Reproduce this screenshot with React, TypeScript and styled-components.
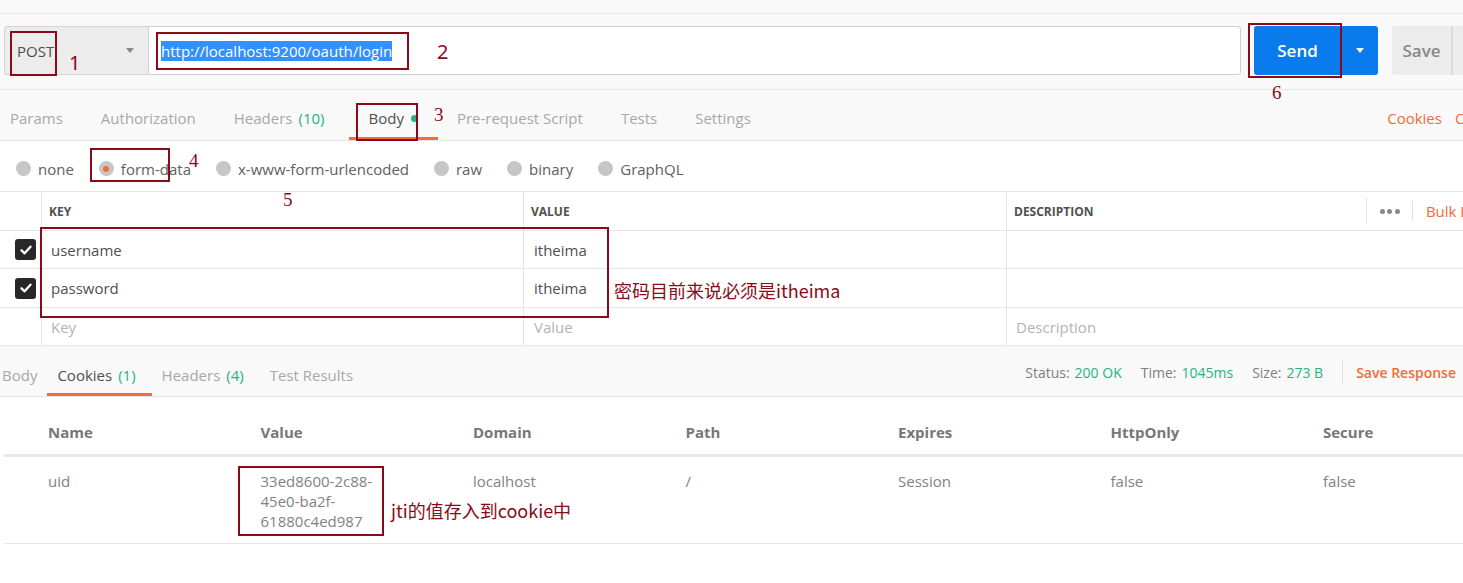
import React from "react";
import styled, { createGlobalStyle, css } from "styled-components";

const Global = createGlobalStyle`
  html, body { margin: 0; padding: 0; background: #ffffff; }
  body {
    font-family: "Open Sans", "Noto Sans", sans-serif;
    color: #505050;
    width: 1463px;
    height: 583px;
    overflow: hidden;
  }
  * { box-sizing: border-box; }
`;

const ORANGE = "#f26b3a";
const GREEN = "#26b47f";
const MARK = "#8b0a1a";

const Page = styled.div`
  position: relative;
  width: 1463px;
  height: 583px;
  overflow: hidden;
  background: #ffffff;
`;

const TopStrip = styled.div`
  height: 14px;
  background: #f9f9f9;
  border-bottom: 1px solid #e6e6e6;
`;

const RequestBar = styled.div`
  display: flex;
  align-items: flex-start;
  height: 76px;
  padding: 12px 0 0 4px;
  background: #f9f9f9;
  border-bottom: 1px solid #e6e6e6;
  & > * { flex-shrink: 0; }
`;

const MethodSelect = styled.div`
  width: 144px;
  height: 49px;
  display: flex;
  align-items: center;
  justify-content: space-between;
  padding: 0 14px 0 12px;
  background: #ececec;
  border: 1px solid #d4d4d4;
  border-right: none;
  border-radius: 3px 0 0 3px;
  font-size: 15px;
  color: #505050;
`;

const Caret = styled.span<{ $color: string }>`
  width: 0;
  height: 0;
  border-left: 4.5px solid transparent;
  border-right: 4.5px solid transparent;
  border-top: 5px solid ${(p) => p.$color};
`;

const UrlInput = styled.div`
  width: 1093px;
  height: 49px;
  display: flex;
  align-items: center;
  padding-left: 12px;
  background: #ffffff;
  border: 1px solid #d0d0d0;
  border-radius: 0 3px 3px 0;
  font-size: 15px;
`;

const Selected = styled.span`
  background: #3390ff;
  color: #ffffff;
  line-height: 20px;
`;

const SendGroup = styled.div`
  display: flex;
  margin-left: 13px;
  height: 49px;
`;

const SendButton = styled.div`
  width: 87px;
  display: flex;
  align-items: center;
  justify-content: center;
  background: #097bed;
  color: #ffffff;
  font-size: 17px;
  font-weight: 600;
  border-radius: 3px 0 0 3px;
`;

const SendMore = styled.div`
  width: 37px;
  display: flex;
  align-items: center;
  justify-content: center;
  background: #097bed;
  border-left: 1px solid #0a6fd8;
  border-radius: 0 3px 3px 0;
`;

const SaveButton = styled.div`
  width: 61px;
  height: 49px;
  margin-left: 14px;
  display: flex;
  align-items: center;
  justify-content: center;
  background: #ececec;
  color: #888888;
  font-size: 17px;
  font-weight: 600;
  border-radius: 3px 0 0 3px;
  border-right: 2px solid #dcdcdc;
`;

const SaveMore = styled.div`
  width: 20px;
  height: 49px;
  background: #ececec;
`;

const TabsRow = styled.div`
  display: flex;
  align-items: stretch;
  height: 51px;
  background: #f9f9f9;
  border-bottom: 1px solid #e6e6e6;
`;

const TabList = styled.div<{ $offset: number }>`
  display: flex;
  flex-shrink: 0;
  margin-left: ${(p) => p.$offset}px;
`;

const Tab = styled.div<{ $active?: boolean; $padX: number; $padTop: number }>`
  position: relative;
  display: flex;
  align-items: center;
  padding: ${(p) => p.$padTop}px ${(p) => p.$padX}px 0;
  font-size: 15px;
  white-space: nowrap;
  color: ${(p) => (p.$active ? "#505050" : "#a8a8a8")};
  ${(p) =>
    p.$active &&
    css`
      &::after {
        content: "";
        position: absolute;
        left: 0;
        right: 0;
        bottom: 0;
        height: 3px;
        background: ${ORANGE};
      }
    `}
`;

const Count = styled.span`
  color: ${GREEN};
  margin-left: 6px;
  padding-right: 6px;
`;

const Dot = styled.span`
  width: 7px;
  height: 7px;
  border-radius: 50%;
  background: ${GREEN};
  margin-left: 7px;
  margin-right: 1px;
`;

const RightLinks = styled.div`
  margin-left: auto;
  margin-right: -28px;
  display: flex;
  align-items: center;
  gap: 13px;
  padding-top: 6px;
  font-size: 15px;
  color: ${ORANGE};
`;

const BodyTypes = styled.div`
  display: flex;
  align-items: center;
  gap: 25px;
  height: 51px;
  padding: 5px 0 0 16px;
  border-bottom: 1px solid #e6e6e6;
`;

const RadioOption = styled.div`
  display: flex;
  align-items: center;
  gap: 7px;
  font-size: 15px;
  color: #606060;
`;

const Radio = styled.span<{ $checked?: boolean }>`
  width: 15px;
  height: 15px;
  border-radius: 50%;
  background: #c6c6c6;
  display: flex;
  align-items: center;
  justify-content: center;
  ${(p) =>
    p.$checked &&
    css`
      &::after {
        content: "";
        width: 6px;
        height: 6px;
        border-radius: 50%;
        background: ${ORANGE};
      }
    `}
`;

const ParamsGrid = styled.div`
  display: grid;
  grid-template-columns: 42px 482px 483px 1fr;
`;

const PCell = styled.div<{ $h: number; $last?: boolean; $pad: number }>`
  height: ${(p) => p.$h}px;
  display: flex;
  align-items: center;
  padding-left: ${(p) => p.$pad}px;
  border-bottom: 1px solid #e6e6e6;
  border-right: ${(p) => (p.$last ? "none" : "1px solid #e6e6e6")};
  font-size: 15px;
  color: #505050;
  overflow: visible;
  white-space: nowrap;
`;

const HeadLabel = styled.span`
  font-size: 12px;
  font-weight: 700;
  color: #505050;
`;

const Placeholder = styled.span`
  color: #b3b3b3;
`;

const HeadActions = styled.div`
  margin-left: auto;
  margin-right: -24px;
  display: flex;
  align-items: center;
  font-size: 15px;
`;

const VSep = styled.span<{ $h: number }>`
  width: 1px;
  height: ${(p) => p.$h}px;
  background: #e2e2e2;
`;

const Dots = styled.span`
  display: flex;
  gap: 2.5px;
  margin: 0 12px 0 13px;
  & > i {
    width: 5px;
    height: 5px;
    border-radius: 50%;
    background: #888888;
  }
`;

const BulkEdit = styled.span`
  margin-left: 13px;
  color: ${ORANGE};
`;

const CheckBox = styled.span`
  width: 21px;
  height: 21px;
  border-radius: 3px;
  background: #282828;
  display: flex;
  align-items: center;
  justify-content: center;
`;

const ResponseBar = styled.div`
  display: flex;
  align-items: stretch;
  height: 51px;
  background: #f9f9f9;
  border-bottom: 1px solid #e6e6e6;
`;

const StatusGroup = styled.div`
  margin-left: auto;
  padding: 2px 7px 0 0;
  display: flex;
  align-items: center;
  font-size: 14px;
  color: #808080;
`;

const StatusItem = styled.span`
  margin-right: 19px;
  white-space: nowrap;
  & > b {
    font-weight: 400;
    color: ${GREEN};
    margin-left: 5px;
  }
`;

const SaveResponse = styled.span`
  margin-left: 13px;
  color: ${ORANGE};
  font-weight: 600;
  white-space: nowrap;
`;

const CookieTable = styled.div`
  margin-left: 4px;
  width: 1488px;
`;

const CookieRow = styled.div<{ $head?: boolean }>`
  display: grid;
  grid-template-columns: repeat(7, 212.5px);
  ${(p) =>
    p.$head
      ? css`
          height: 60px;
          align-items: end;
          padding-bottom: 12px;
          border-bottom: 3px solid #e8e8e8;
          font-weight: 700;
          color: #777777;
        `
      : css`
          height: 87px;
          align-items: start;
          padding-top: 14px;
          border-bottom: 1px solid #e6e6e6;
          color: #828282;
        `}
`;

const CookieCell = styled.div`
  padding-left: 44px;
  font-size: 15px;
  line-height: 20px;
`;

const Wrap = styled.span`
  display: block;
  max-width: 130px;
`;

const Overlay = styled.div`
  position: absolute;
  inset: 0;
  pointer-events: none;
`;

const MarkBox = styled.div<{ $x: number; $y: number; $w: number; $h: number }>`
  position: absolute;
  left: ${(p) => p.$x}px;
  top: ${(p) => p.$y}px;
  width: ${(p) => p.$w}px;
  height: ${(p) => p.$h}px;
  border: 2px solid ${MARK};
`;

const MarkNum = styled.div<{ $x: number; $y: number; $serif?: boolean }>`
  position: absolute;
  left: ${(p) => p.$x}px;
  top: ${(p) => p.$y}px;
  font-family: ${(p) =>
    p.$serif ? '"Liberation Serif", serif' : '"Noto Sans", "Liberation Sans", sans-serif'};
  font-size: ${(p) => (p.$serif ? 19 : 20)}px;
  line-height: 20px;
  color: ${MARK};
`;

const MarkText = styled.div<{ $x: number; $y: number; $size: number }>`
  position: absolute;
  left: ${(p) => p.$x}px;
  top: ${(p) => p.$y}px;
  font-family: "Noto Sans CJK SC", "Noto Sans", sans-serif;
  font-size: ${(p) => p.$size}px;
  line-height: 24px;
  color: ${MARK};
  white-space: nowrap;
`;

const Check = () => (
  <svg width="14" height="14" viewBox="0 0 14 14">
    <path d="M2.5 7.3 L5.6 10.3 L11.5 3.7" fill="none" stroke="#fff" strokeWidth="2.3" strokeLinecap="round" strokeLinejoin="round" />
  </svg>
);

const reqTabs = [
  { label: "Params" },
  { label: "Authorization" },
  { label: "Headers", count: "(10)" },
  { label: "Body", active: true, dot: true },
  { label: "Pre-request Script" },
  { label: "Tests" },
  { label: "Settings" },
];

const bodyTypes = ["none", "form-data", "x-www-form-urlencoded", "raw", "binary", "GraphQL"];

const params = [
  { key: "username", value: "itheima" },
  { key: "password", value: "itheima" },
];

const cookieCols = ["Name", "Value", "Domain", "Path", "Expires", "HttpOnly", "Secure"];

export default function App() {
  return (
    <Page>
      <Global />
      <TopStrip />
      <RequestBar>
        <MethodSelect>
          <span>POST</span>
          <Caret $color="#888888" />
        </MethodSelect>
        <UrlInput>
          <Selected>http://localhost:9200/oauth/login</Selected>
        </UrlInput>
        <SendGroup>
          <SendButton>Send</SendButton>
          <SendMore>
            <Caret $color="#ffffff" />
          </SendMore>
        </SendGroup>
        <SaveButton>Save</SaveButton>
        <SaveMore />
      </RequestBar>

      <TabsRow>
        <TabList $offset={-9}>
          {reqTabs.map((t) => (
            <Tab key={t.label} $active={t.active} $padX={19} $padTop={6}>
              {t.label}
              {t.count && <Count>{t.count}</Count>}
              {t.dot && <Dot />}
            </Tab>
          ))}
        </TabList>
        <RightLinks>
          <span>Cookies</span>
          <span>Code</span>
        </RightLinks>
      </TabsRow>

      <BodyTypes>
        {bodyTypes.map((b) => (
          <RadioOption key={b}>
            <Radio $checked={b === "form-data"} />
            {b}
          </RadioOption>
        ))}
      </BodyTypes>

      <ParamsGrid>
        <PCell $h={39} $pad={0} />
        <PCell $h={39} $pad={7}>
          <HeadLabel>KEY</HeadLabel>
        </PCell>
        <PCell $h={39} $pad={7}>
          <HeadLabel>VALUE</HeadLabel>
        </PCell>
        <PCell $h={39} $pad={7} $last>
          <HeadLabel>DESCRIPTION</HeadLabel>
          <HeadActions>
            <VSep $h={26} />
            <Dots>
              <i />
              <i />
              <i />
            </Dots>
            <VSep $h={20} />
            <BulkEdit>Bulk Edit</BulkEdit>
          </HeadActions>
        </PCell>
        {params.map((p, i) => (
          <React.Fragment key={p.key}>
            <PCell $h={i === 0 ? 38 : 39} $pad={15}>
              <CheckBox>
                <Check />
              </CheckBox>
            </PCell>
            <PCell $h={i === 0 ? 38 : 39} $pad={9}>{p.key}</PCell>
            <PCell $h={i === 0 ? 38 : 39} $pad={10}>{p.value}</PCell>
            <PCell $h={i === 0 ? 38 : 39} $pad={9} $last />
          </React.Fragment>
        ))}
        <PCell $h={38} $pad={0} />
        <PCell $h={38} $pad={9}>
          <Placeholder>Key</Placeholder>
        </PCell>
        <PCell $h={38} $pad={10}>
          <Placeholder>Value</Placeholder>
        </PCell>
        <PCell $h={38} $pad={9} $last>
          <Placeholder>Description</Placeholder>
        </PCell>
      </ParamsGrid>

      <ResponseBar>
        <TabList $offset={-8}>
          <Tab $padX={10} $padTop={8}>Body</Tab>
          <Tab $padX={10} $padTop={8} $active>
            Cookies<Count>(1)</Count>
          </Tab>
          <Tab $padX={10} $padTop={8}>
            Headers<Count>(4)</Count>
          </Tab>
          <Tab $padX={10} $padTop={8}>Test Results</Tab>
        </TabList>
        <StatusGroup>
          <StatusItem>
            Status:<b>200 OK</b>
          </StatusItem>
          <StatusItem>
            Time:<b>1045ms</b>
          </StatusItem>
          <StatusItem>
            Size:<b>273 B</b>
          </StatusItem>
          <VSep $h={24} />
          <SaveResponse>Save Response</SaveResponse>
        </StatusGroup>
      </ResponseBar>

      <CookieTable>
        <CookieRow $head>
          {cookieCols.map((c) => (
            <CookieCell key={c}>{c}</CookieCell>
          ))}
        </CookieRow>
        <CookieRow>
          <CookieCell>uid</CookieCell>
          <CookieCell>
            <Wrap>33ed8600-2c88-45e0-ba2f-61880c4ed987</Wrap>
          </CookieCell>
          <CookieCell>localhost</CookieCell>
          <CookieCell>/</CookieCell>
          <CookieCell>Session</CookieCell>
          <CookieCell>false</CookieCell>
          <CookieCell>false</CookieCell>
        </CookieRow>
      </CookieTable>

      <Overlay>
        <MarkBox $x={10} $y={31} $w={47} $h={45} />
        <MarkNum $x={69} $y={53}>1</MarkNum>
        <MarkBox $x={156} $y={32} $w={253} $h={38} />
        <MarkNum $x={437} $y={42}>2</MarkNum>
        <MarkBox $x={356} $y={103} $w={62} $h={38} />
        <MarkNum $x={434} $y={105} $serif>3</MarkNum>
        <MarkBox $x={90} $y={148} $w={80} $h={34} />
        <MarkNum $x={189} $y={151} $serif>4</MarkNum>
        <MarkNum $x={283} $y={190} $serif>5</MarkNum>
        <MarkBox $x={1248} $y={23} $w={94} $h={55} />
        <MarkNum $x={1272} $y={83} $serif>6</MarkNum>
        <MarkBox $x={40} $y={227} $w={569} $h={91} />
        <MarkText $x={614} $y={278} $size={18}>密码目前来说必须是itheima</MarkText>
        <MarkBox $x={238} $y={466} $w={146} $h={70} />
        <MarkText $x={391} $y={498} $size={18}>jti的值存入到cookie中</MarkText>
      </Overlay>
    </Page>
  );
}
